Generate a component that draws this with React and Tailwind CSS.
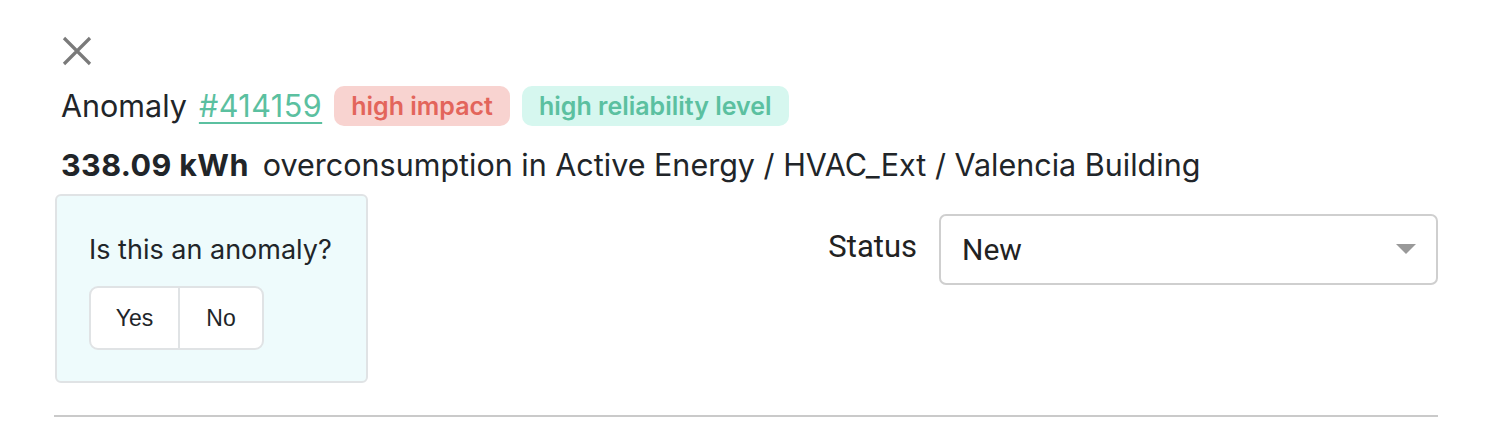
import React from 'react';

export default function App() {
    return (
        <div className="min-h-screen bg-white font-['Inter',sans-serif] text-[#212529]">
            <div className="pl-[54px] pr-[58px] pt-[34px]">
                {/* Close */}
                <button className="block w-[34px] h-[34px] ml-[6px] text-[#7a7a7a]">
                    <svg viewBox="0 0 34 34" width="34" height="34" fill="none" stroke="currentColor" strokeWidth="3.2">
                        <path d="M4 4 L30 30 M30 4 L4 30" />
                    </svg>
                </button>

                {/* Title */}
                <div className="flex items-center gap-[12px] mt-[18px] ml-[7px] text-[30.5px] leading-[40px]">
                    <span>Anomaly</span>
                    <a href="#" className="text-[#5bc0a0] underline underline-offset-[5px] decoration-[2px] tracking-[0.5px]">#414159</a>
                    <span className="rounded-[10px] bg-[#f8d3d0] px-[17px] text-[25px] font-semibold text-[#e3655b]">high impact</span>
                    <span className="rounded-[10px] bg-[#d6f7ef] px-[17px] text-[25px] font-semibold text-[#5bc0a0]">high reliability level</span>
                </div>

                {/* Summary */}
                <div className="mt-[19px] ml-[7px] text-[30.5px] leading-[40px]">
                    <span className="font-bold tracking-[0.4px]">338.09 kWh</span>
                    <span className="ml-[14px]">overconsumption in Active Energy / HVAC_Ext / Valencia Building</span>
                </div>

                <div className="flex items-start justify-between mt-[9px]">
                    {/* Feedback card */}
                    <div className="ml-px w-[313px] h-[189px] rounded-[6px] border-2 border-[#e0e3e5] bg-[#eefbfc] px-[32px] pt-[38px]">
                        <div className="text-[27px] leading-[32px] whitespace-nowrap">Is this an anomaly?</div>
                        <div className="mt-[20px] inline-flex h-[64px] rounded-[9px] border-2 border-[#e0e3e5] bg-white text-[23px] font-['Liberation_Sans',sans-serif]">
                            <button className="w-[89px] border-r-2 border-[#e0e3e5]">Yes</button>
                            <button className="w-[82px]">No</button>
                        </div>
                    </div>

                    {/* Status */}
                    <div className="flex items-center gap-[22px] mt-[20px] font-['Roboto',sans-serif]">
                        <span className="text-[31px] text-[#222] -mt-[4px]">Status</span>
                        <div className="flex items-center justify-between w-[499px] h-[71px] rounded-[7px] border-2 border-[#cfcfcf] pl-[21px] pr-[20px]">
                            <span className="text-[30px] text-[#222]">New</span>
                            <svg width="20" height="10" viewBox="0 0 20 10" className="mb-[2px]">
                                <path d="M0 0 H20 L10 10 Z" fill="#999" />
                            </svg>
                        </div>
                    </div>
                </div>

                <div className="mt-[32px] h-[2px] bg-[#cacaca]" />
            </div>
        </div>
    );
}
